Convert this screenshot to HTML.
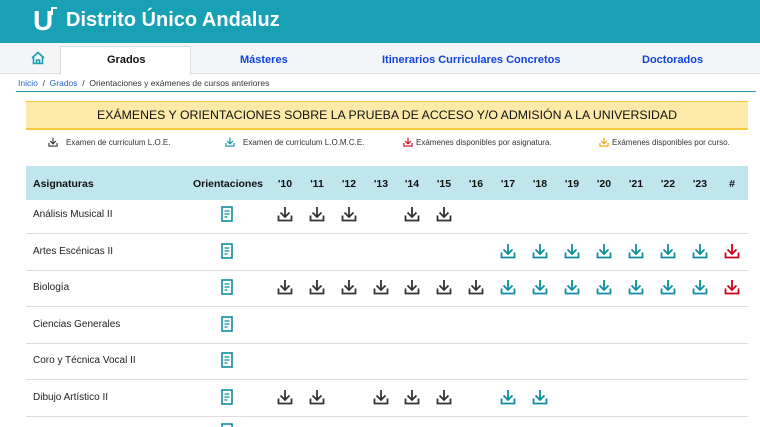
<!DOCTYPE html>
<html><head><meta charset="utf-8"><style>
*{margin:0;padding:0;box-sizing:border-box}
html,body{width:760px;height:427px;overflow:hidden}
body{background:#fff;font-family:"Liberation Sans",sans-serif;position:relative;color:#222}
.a{position:absolute}
.hdr{left:0;top:0;width:760px;height:43px;background:#18a0b4}
.nav{left:0;top:43px;width:760px;height:31px;background:#f4f5f6;border-bottom:1px solid #ddd}
.tab{top:46px;left:60px;width:131px;height:29px;background:#fff;border:1px solid #ddd;border-bottom:none}
.nl{font-size:11px;font-weight:bold;color:#1144dd;top:54px;white-space:nowrap}
.bc{top:78px;left:18px;font-size:8.5px;color:#333}
.bc span{color:#2266cc}
.ban{left:26px;top:101px;width:722px;height:29px;background:#fde9a8;border-top:1px solid #f5c842;border-bottom:2px solid #f5c842;text-align:center;font-size:12.3px;line-height:27px;color:#111}
.lg{top:138px;font-size:8px;color:#333;white-space:nowrap}
.th{left:26px;top:166px;width:722px;height:34px;background:#bfe6ec}
.ht{top:178px;font-size:10.5px;font-weight:bold;color:#111;white-space:nowrap}
.rl{left:26px;width:722px;height:1px;background:#dcdcdc}
.sn{left:33px;font-size:10px;color:#222;white-space:nowrap}
svg.i{position:absolute}
</style></head><body>
<div class="a hdr"></div>
<div class="a" style="left:33px;top:6px;font-size:28px;font-weight:bold;color:#fff;line-height:30px">U</div>
<svg class="a" style="left:50px;top:6px" width="8" height="10"><path d="M2 9V2h5" stroke="#fff" stroke-width="2" fill="none"/></svg>
<div class="a" style="left:66px;top:9px;font-size:20px;font-weight:bold;color:#fff">Distrito Único Andaluz</div>
<div class="a nav"></div>
<div class="a tab"></div>
<svg class="a" style="left:31px;top:51px" width="14" height="14"><path d="M1 7L7 1.5 13 7M2.5 6v6.5h9V6M5.5 12.5V9h3v3.5" stroke="#1a9fb2" stroke-width="1.6" fill="none"/></svg>
<div class="a nl" style="left:107px;color:#111">Grados</div>
<div class="a nl" style="left:240px">Másteres</div>
<div class="a nl" style="left:382px">Itinerarios Curriculares Concretos</div>
<div class="a nl" style="left:642px">Doctorados</div>
<div class="a bc"><span>Inicio</span> &nbsp;/&nbsp; <span>Grados</span> &nbsp;/&nbsp; Orientaciones y exámenes de cursos anteriores</div>
<div class="a" style="left:16px;top:91px;width:740px;height:1px;background:#1a9fb2"></div>
<div class="a ban">EXÁMENES Y ORIENTACIONES SOBRE LA PRUEBA DE ACCESO Y/O ADMISIÓN A LA UNIVERSIDAD</div>
<svg width="0" height="0" style="position:absolute"><defs>
<symbol id="dl" viewBox="0 0 16 16"><path d="M8 1v10M3.5 6.5L8 11l4.5-4.5M1.5 9.5v5h13v-5" stroke-width="1.8" fill="none"/></symbol>
<symbol id="doc" viewBox="0 0 12 16"><rect x="1" y="1" width="10" height="14" stroke-width="1.6" fill="none"/><path d="M3.5 5h5M3.5 8h5M3.5 11h3" stroke-width="1.3"/></symbol>
</defs></svg>
<svg class="i" style="left:48px;top:137px" width="10" height="10" stroke="#333"><use href="#dl"/></svg>
<div class="a lg" style="left:66px">Examen de curriculum L.O.E.</div>
<svg class="i" style="left:225px;top:137px" width="10" height="10" stroke="#0e8ea0"><use href="#dl"/></svg>
<div class="a lg" style="left:243px">Examen de curriculum L.O.M.C.E.</div>
<svg class="i" style="left:403px;top:137px" width="10" height="10" stroke="#d0021b"><use href="#dl"/></svg>
<div class="a lg" style="left:416px">Exámenes disponibles por asignatura.</div>
<svg class="i" style="left:599px;top:137px" width="10" height="10" stroke="#f0a30a"><use href="#dl"/></svg>
<div class="a lg" style="left:612px">Exámenes disponibles por curso.</div>
<div class="a th"></div>
<div class="a ht" style="left:33px">Asignaturas</div>
<div class="a ht" style="left:193px">Orientaciones</div>
<div id="rows"></div>
<script>
var xs=[285,317,349,381,412,444,476,508,540,572,604,636,668,700,732];
var lb=["'10","'11","'12","'13","'14","'15","'16","'17","'18","'19","'20","'21","'22","'23","#"];
var h='';
xs.forEach(function(x,i){h+='<div class="a ht" style="left:'+(x-12)+'px;width:24px;text-align:center">'+lb[i]+'</div>';});
var D='#333',T='#0e8ea0',R='#d0021b';
var rows=[["Análisis Musical II",[D,D,D,0,D,D]],
["Artes Escénicas II",[0,0,0,0,0,0,0,T,T,T,T,T,T,T,R]],
["Biología",[D,D,D,D,D,D,D,T,T,T,T,T,T,T,R]],
["Ciencias Generales",[]],
["Coro y Técnica Vocal II",[]],
["Dibujo Artístico II",[D,D,0,D,D,D,0,T,T]]];
rows.forEach(function(r,k){var cy=214+k*36.5;
h+='<div class="a sn" style="top:'+(cy-5)+'px">'+r[0]+'</div>';
h+='<svg class="i" style="left:221px;top:'+(cy-8)+'px" width="12" height="16" stroke="#0e8ea0"><use href="#doc"/></svg>';
r[1].forEach(function(c,i){if(c)h+='<svg class="i" style="left:'+(xs[i]-8)+'px;top:'+(cy-8)+'px" width="16" height="16" stroke="'+c+'"><use href="#dl"/></svg>';});
h+='<div class="a rl" style="top:'+(cy+19)+'px"></div>';});
h+='<svg class="i" style="left:221px;top:423px" width="12" height="16" stroke="#0e8ea0"><use href="#doc"/></svg>';
document.getElementById('rows').innerHTML=h;
</script>
</body></html>
